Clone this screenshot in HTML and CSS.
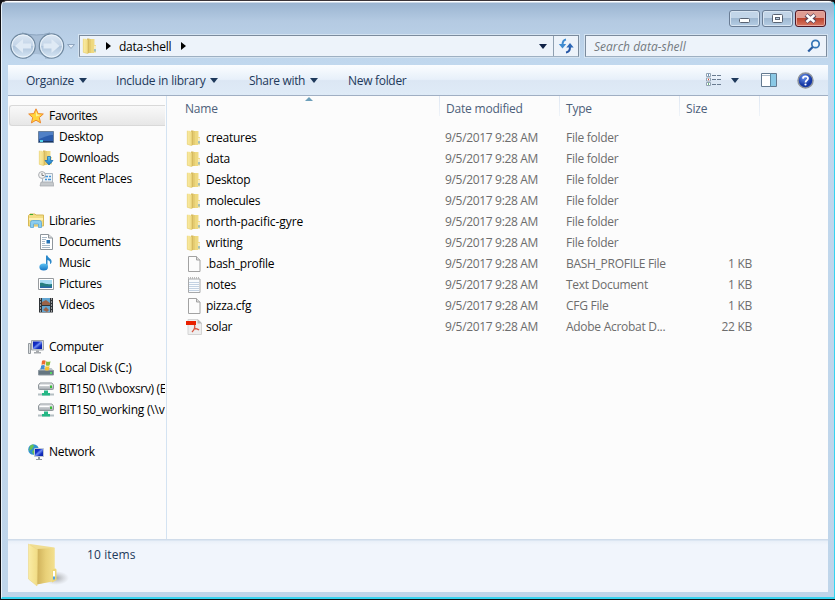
FILE: index.html
```html
<!DOCTYPE html>
<html lang="en">
<head>
<meta charset="utf-8">
<title>data-shell</title>
<link rel="stylesheet" href="styles.css">
</head>
<body>
<svg class="defs" aria-hidden="true">
  <defs>
    <linearGradient id="gold"><stop offset="0" stop-color="#cfb15a"/><stop offset=".5" stop-color="#e8d078"/><stop offset="1" stop-color="#f3e08f"/></linearGradient>
    <linearGradient id="flap"><stop offset="0" stop-color="#faeca6"/><stop offset="1" stop-color="#f1dc84"/></linearGradient>
    <linearGradient id="orb" x2="0" y2="1"><stop offset="0" stop-color="#dde9f5"/><stop offset=".48" stop-color="#c3d4e7"/><stop offset=".52" stop-color="#afc5dc"/><stop offset="1" stop-color="#d9e8f6"/></linearGradient>
    <linearGradient id="screen" x2="1" y2="1"><stop offset="0" stop-color="#0c1fae"/><stop offset=".35" stop-color="#1430c8"/><stop offset=".5" stop-color="#6f8cf2"/><stop offset=".7" stop-color="#1430c0"/><stop offset="1" stop-color="#0a1c9c"/></linearGradient>
    <linearGradient id="drive" x2="0" y2="1"><stop offset="0" stop-color="#f4f5f6"/><stop offset="1" stop-color="#a2a8ad"/></linearGradient>
    <linearGradient id="blue" x2="0" y2="1"><stop offset="0" stop-color="#5ec4f4"/><stop offset="1" stop-color="#1474c4"/></linearGradient>
    <radialGradient id="shade"><stop offset="0" stop-color="#777" stop-opacity=".6"/><stop offset="1" stop-color="#999" stop-opacity="0"/></radialGradient>
    <radialGradient id="help" cx=".4" cy=".3"><stop offset="0" stop-color="#6b94ee"/><stop offset="1" stop-color="#1437a4"/></radialGradient>
  </defs>
  <symbol id="folder" viewBox="0 0 16 16"><path d="M6 1h6v14H6Z" fill="#eed97f"/><path d="M5 .5h2.500v14.500l-2.500.5Z" fill="#d6ba60"/><path d="M7.500 1H9v14H7.500Z" fill="#e6cd72"/><path d="M1 .7h2.500L5.700 2v13.800L1 14.500Z" fill="url(#flap)"/><path d="M1.300.8v13.500l4.400 1.200" fill="none" stroke="#e6cf75" stroke-width=".6"/><path d="M11.500 1h1v6H14v7.500h-2.500Z" fill="#f0dc8b"/><path d="M13 8v3.500" stroke="#fff"/><path d="M13 11v2.500" stroke="#54a3e5"/></symbol>
  <symbol id="page" viewBox="0 0 16 16"><path d="M2.500.5h8L14 4v11.500H2.500Z" fill="#fcfcfc" stroke="#a2a2a2"/><path d="M10.500.5V4H14" fill="#ddd" stroke="#a2a2a2"/></symbol>
  <symbol id="notes" viewBox="0 0 16 16"><path d="M2.500 2H14v13.500H2.500Z" fill="#fafcfe" stroke="#a7a9ab"/><path d="M3 5.500h10M3 7.500h10M3 9.500h10M3 11.500h10M3 13.500h10" stroke="#c3d2e3"/><path d="M2 1h12" stroke="#bbb" stroke-width="2" stroke-dasharray="1 1"/></symbol>
  <symbol id="pdf" viewBox="0 0 16 16"><path d="M2 .5h9.500L15.500 4v11.500H2Z" fill="#eee" stroke="#d4d4d4"/><path d="M11.500 0 16 4.500h-4.500Z" fill="#b7b7b7"/><path d="M0 2h10v4H0Z" fill="#e92000"/><path d="M8.500 6c1 3-.5 5-2.500 7m2-3.500c2 0 4 .5 5 1.500m-5-1.500 1.500-.5" fill="none" stroke="#d75541" stroke-width="1.300"/></symbol>
  <symbol id="star" viewBox="0 0 16 16"><path d="m8 .8 2.100 4.800 5.200.4-4 3.600 1.300 5.300L8 12.200l-4.600 2.700 1.300-5.300L.7 6l5.200-.4Z" fill="#ffd53c" stroke="#ed882f"/><path d="M8 3 9.300 6.500 13 7 8 8.500Z" fill="#fff19a"/></symbol>
  <symbol id="desktop" viewBox="0 0 16 16"><path d="M.5 2.500h15v11H.5Z" fill="#2b5cad" stroke="#69809d"/><path d="M1 3h14v3c-5 0-8 2-14 4Z" fill="#5080c6"/><path d="M1 12.500h14" stroke="#183664"/><path d="M2 11h3v2H2Z" fill="#50d1e8"/></symbol>
  <symbol id="download" viewBox="0 0 16 16"><use href="#folder"/><path d="M9.500 6.500h3v4H15l-4 4.500-4-4.500h2.500Z" fill="url(#blue)" stroke="#1c6eb0" stroke-width=".8"/></symbol>
  <symbol id="recent" viewBox="0 0 16 16"><path d="M4.500 2.500h10v9h-10Z" fill="#edf3f8" stroke="#a9b5c0"/><path d="M7 5.500h3m1 0h2M7 8.500h2m1 0h3" stroke="#4695d6" stroke-width="1.500"/><path d="m3 11 12 0 1 4H2Z" fill="#c5c9cc" stroke="#a0a5aa" stroke-width=".7"/><circle cx="4" cy="4" r="3.400" fill="#f3f3f3" stroke="#aaadb1"/><path d="M4 2v2.500h2" fill="none" stroke="#666" stroke-width=".8"/></symbol>
  <symbol id="libraries" viewBox="0 0 16 16"><path d="M.5 2.500 2 1h5l1 1h7.500v11H.5Z" fill="#f3dd84" stroke="#d6b957"/><path d="M1 5h14v2H1Z" fill="#fff0b1"/><path d="M2 1.500h3" stroke="#39a832"/><path d="M2.500 14.500V9.500q0-2 2-2h7q2 0 2 2v5h-3V11h-5v3.500Z" fill="#8bcdf0" stroke="#5aa6d6" stroke-width=".8"/></symbol>
  <symbol id="document" viewBox="0 0 16 16"><path d="M2.500.5h8L14.500 4v11.500h-12Z" fill="#fff" stroke="#8f969c"/><path d="M10.500.5V4h4" fill="#ddd" stroke="#8f969c"/><path d="M4 3.500h5M4 5.500h4M4 7.500h3M4 9.500h3M4 11.500h8M4 13.500h8" stroke="#a7b8c6"/><path d="M8.500 6H12v3.500H8.500Z" fill="#2573b5"/></symbol>
  <symbol id="music" viewBox="0 0 16 16"><path d="M8 .5h1.500c.5 3 5 3 4 7-.5 1-1 1.500-1.500 1.500.5-3-1-3.500-2.500-4V12H8Z" fill="#2a87c9"/><ellipse cx="5.700" cy="12" rx="4.300" ry="3.500" fill="url(#blue)"/></symbol>
  <symbol id="picture" viewBox="0 0 16 16"><path d="M.5 2.500h15v11H.5Z" fill="#fff" stroke="#969a9e"/><path d="M2 4h12v8H2Z" fill="#a9dcf4"/><path d="M2 7c4-1 4 2 12 1v4H2Z" fill="#257e80"/><path d="M2 10.500h12V12H2Z" fill="#2866a8"/></symbol>
  <symbol id="video" viewBox="0 0 16 16"><path d="M1 1h14v14.500H1Z" fill="#303438"/><path d="M4 1h8v7H4ZM4 9h8v6H4Z" fill="#63a6d2"/><path d="m4 5 4-2 4 3v2H4ZM5 13l3-3 3 3-2 2Z" fill="#9b6348"/><path d="M2.500 1.500v14m11-14v14" stroke="#fff" stroke-dasharray="1 2"/></symbol>
  <symbol id="computer" viewBox="0 0 16 16"><path d="M.5 4.500h2v10h-2Z" fill="#dce0e2" stroke="#93999e"/><path d="M3.500 1.500h12v9.500h-12Z" fill="#d4d8dc" stroke="#a0a5aa"/><path d="M5 2.500h9V10H5Z" fill="url(#screen)"/><path d="M8 11.500h3V13h2v1.500H6V13h2Z" fill="#a5a9ad"/></symbol>
  <symbol id="disk" viewBox="0 0 16 16"><path d="M2.500 8h11l2.500 3H0Z" fill="#bac2c9"/><path d="M.5 10.500h15v4.500H.5Z" fill="#657681" stroke="#8c979f"/><path d="M12 12h2v2h-2Z" fill="#55d565"/><path d="M4 .8q2-1 3.700 0L7 4.800q-1-1-3.500 0Z" fill="#ed6b30"/><path d="M8.200 1.300q2 1 4.300 0l-.8 4q-2 1-4 0Z" fill="#87bd3e"/><path d="M3.200 5.500q2-1 3.700 0l-.7 4q-1-1-3.700 0Z" fill="#438bd2"/><path d="M7.500 6q2 1 4 0L11 10q-2 1-4.200 0Z" fill="#f5c132"/></symbol>
  <symbol id="netdrive" viewBox="0 0 16 16"><path d="M.5 4 2 2h12l1.500 2v3.500q0 1-1 1h-13q-1 0-1-1Z" fill="url(#drive)" stroke="#8f969b"/><path d="M1.500 4.500h10" stroke="#fff"/><path d="M12 4.500h2V7h-2Z" fill="#39bc36"/><path d="M0 13.500h16" stroke="#b5bfc3" stroke-width="2"/><path d="M6 9.500h4V12h2v2.500H4V12h2Z" fill="#25b785"/></symbol>
  <symbol id="network" viewBox="0 0 16 16"><circle cx="5.500" cy="5.500" r="5.300" fill="#3092d0"/><path d="M2 2q3-3 4 0L4 5 1 7Zm4 3 3 2-3 4-2-3Z" fill="#68c252"/><path d="M6.500 4.500h9v8h-9Z" fill="url(#screen)" stroke="#c0c8d0"/><path d="M10 13h2v2h2v1H8v-1h2Z" fill="#8f989f"/></symbol>
</svg>

<div class="window">
  <header class="titlebar">
    <div class="captions">
      <span class="caption"><svg width="31" height="17"><rect x="10.500" y="8.500" width="10" height="4" rx="1" fill="#fff" stroke="#596372"/></svg></span>
      <span class="caption"><svg width="31" height="17"><rect x="10.500" y="4.500" width="10" height="8" rx="1" fill="#fff" stroke="#596372"/><rect x="13.500" y="7.500" width="4" height="2" fill="#bacde1" stroke="#596372"/></svg></span>
      <span class="caption close"><svg width="31" height="17"><path d="m11 5 9 7m0-7-9 7" stroke="#59455a" stroke-width="4.500"/><path d="m11.500 5 8 7m0-7-8 7" stroke="#fff" stroke-width="2.600"/></svg></span>
    </div>
  </header>
  <div class="navbar">
    <svg class="orbs" width="70" height="30" viewBox="0 0 70 30"><path d="M14 1.500Q29 6 42 1.500V28H14Z" fill="#a8bed6"/><path d="M14 2Q29 6 42 2" fill="none" stroke="#8da6c0"/><path d="M19 25q9-4 18 0v5H19Z" fill="#bfd5ec"/><circle cx="15" cy="15" r="12.200" fill="url(#orb)" stroke="#6f889f" stroke-width="1.200"/><circle cx="43.500" cy="15" r="12.200" fill="url(#orb)" stroke="#6f889f" stroke-width="1.200"/><circle cx="15" cy="15" r="11" fill="none" stroke="#ecf4fb"/><circle cx="43.500" cy="15" r="11" fill="none" stroke="#ecf4fb"/><path d="m7 15 8-7v4.500h8v5h-8V22Z" fill="#dfeaf5"/><path d="m51.500 15-8-7v4.500h-8v5h8V22Z" fill="#dfeaf5"/><path d="M59.500 13.500h7L63 17.500Z" fill="#e5effa" stroke="#8fa6c0"/></svg>
    <div class="address">
      <svg class="icon"><use href="#folder"/></svg>
      <svg class="crumb" width="5" height="8"><path d="M0 0 5 4 0 8Z"/></svg>
      <span class="path">data-shell</span>
      <svg class="crumb" width="5" height="8"><path d="M0 0 5 4 0 8Z"/></svg>
      <svg class="drop" width="8" height="5"><path d="M0 0h8L4 5Z" fill="#102246"/></svg>
      <span class="refresh"><svg width="16" height="16" viewBox="0 0 16 16"><path d="M8 1.500Q4.500 2 4.500 7" fill="none" stroke="#3f8bd0" stroke-width="2"/><path d="M.8 6h7.400l-3.700 4.500Z" fill="#3f8bd0"/><path d="M8 14.500Q12 14 12 9" fill="none" stroke="#2757a5" stroke-width="2"/><path d="M8.300 9.500h7.400L12 5Z" fill="#2d68b7"/></svg></span>
    </div>
    <div class="search"><span>Search data-shell</span><svg width="14" height="14" viewBox="0 0 14 14"><circle cx="8.500" cy="5" r="3.700" fill="#f2f8fd" stroke="#3575b6" stroke-width="1.700"/><path d="m5.700 8-4.500 4.500" stroke="#2a5da1" stroke-width="2.300"/></svg></div>
  </div>

  <main class="client">
    <div class="toolbar">
      <span class="cmd organize">Organize<i class="caret"></i></span>
      <span class="cmd include">Include in library<i class="caret"></i></span>
      <span class="cmd share">Share with<i class="caret"></i></span>
      <span class="cmd">New folder</span>
      <div class="tools">
        <svg width="16" height="14" viewBox="0 0 16 14"><path d="M.5.500h4v3h-4zm0 4.500h4v3h-4zm0 4.500h4v3h-4z" fill="#fff" stroke="#91a2b2"/><path d="M2 2h1" stroke="#3670aa" stroke-width="1.300"/><path d="M2 6.500h1" stroke="#d44836" stroke-width="1.500"/><path d="M2 11h1" stroke="#3c9b51" stroke-width="1.300"/><path d="M6 2.500h4m1 0h4M6 6.500h4m1 0h4M6 11.500h4m1 0h4" stroke="#6a7c91"/></svg>
        <i class="caret"></i>
        <svg class="pane" width="16" height="14"><path d="M.5.500h15v13H.5Z" fill="#fff" stroke="#63798f"/><path d="M1 2.500h9" stroke="#a9b9c9"/><path d="M10 1h5v12h-5Z" fill="#8ac8e5"/><path d="M9.500 0v14" stroke="#5b8aa4"/></svg>
        <svg class="help" width="17" height="17"><circle cx="8.500" cy="8.500" r="7.500" fill="url(#help)" stroke="#8e949c" stroke-width="1.500"/><path d="M5.900 6.600C6 3.500 11.200 3.600 11 6.500 10.900 8.200 8.500 8.300 8.500 10.400" fill="none" stroke="#fff" stroke-width="1.800"/><circle cx="8.500" cy="12.500" r="1.100" fill="#fff"/></svg>
      </div>
    </div>
    <div class="body">
      <nav class="tree">
        <section><div class="node root selected"><svg class="icon"><use href="#star"/></svg><span>Favorites</span></div>
          <div class="node"><svg class="icon"><use href="#desktop"/></svg><span>Desktop</span></div>
          <div class="node"><svg class="icon"><use href="#download"/></svg><span>Downloads</span></div>
          <div class="node"><svg class="icon"><use href="#recent"/></svg><span>Recent Places</span></div></section>
        <section><div class="node root"><svg class="icon"><use href="#libraries"/></svg><span>Libraries</span></div>
          <div class="node"><svg class="icon"><use href="#document"/></svg><span>Documents</span></div>
          <div class="node"><svg class="icon"><use href="#music"/></svg><span>Music</span></div>
          <div class="node"><svg class="icon"><use href="#picture"/></svg><span>Pictures</span></div>
          <div class="node"><svg class="icon"><use href="#video"/></svg><span>Videos</span></div></section>
        <section><div class="node root"><svg class="icon"><use href="#computer"/></svg><span>Computer</span></div>
          <div class="node"><svg class="icon"><use href="#disk"/></svg><span>Local Disk (C:)</span></div>
          <div class="node drive"><svg class="icon"><use href="#netdrive"/></svg><span>BIT150 (\\vboxsrv) (E</span></div>
          <div class="node working"><svg class="icon"><use href="#netdrive"/></svg><span>BIT150_working (\\v</span></div></section>
        <section><div class="node root"><svg class="icon"><use href="#network"/></svg><span>Network</span></div></section>
      </nav>
      <div class="files">
        <div class="head"><span class="name">Name<svg class="sort" width="8" height="4"><path d="M0 4 4 0 8 4Z" fill="#6d9fba"/></svg></span><span>Date modified</span><span>Type</span><span>Size</span></div>
        <div class="row"><span class="name"><svg class="icon"><use href="#folder"/></svg>creatures</span><span class="date">9/5/2017 9:28 AM</span><span>File folder</span><span class="size"></span></div>
        <div class="row"><span class="name"><svg class="icon"><use href="#folder"/></svg>data</span><span class="date">9/5/2017 9:28 AM</span><span>File folder</span><span class="size"></span></div>
        <div class="row"><span class="name"><svg class="icon"><use href="#folder"/></svg>Desktop</span><span class="date">9/5/2017 9:28 AM</span><span>File folder</span><span class="size"></span></div>
        <div class="row"><span class="name"><svg class="icon"><use href="#folder"/></svg>molecules</span><span class="date">9/5/2017 9:28 AM</span><span>File folder</span><span class="size"></span></div>
        <div class="row"><span class="name wide"><svg class="icon"><use href="#folder"/></svg>north-pacific-gyre</span><span class="date">9/5/2017 9:28 AM</span><span>File folder</span><span class="size"></span></div>
        <div class="row"><span class="name"><svg class="icon"><use href="#folder"/></svg>writing</span><span class="date">9/5/2017 9:28 AM</span><span>File folder</span><span class="size"></span></div>
        <div class="row"><span class="name"><svg class="icon"><use href="#page"/></svg>.bash_profile</span><span class="date">9/5/2017 9:28 AM</span><span>BASH_PROFILE File</span><span class="size">1 KB</span></div>
        <div class="row"><span class="name"><svg class="icon"><use href="#notes"/></svg>notes</span><span class="date">9/5/2017 9:28 AM</span><span>Text Document</span><span class="size">1 KB</span></div>
        <div class="row"><span class="name"><svg class="icon"><use href="#page"/></svg>pizza.cfg</span><span class="date">9/5/2017 9:28 AM</span><span>CFG File</span><span class="size">1 KB</span></div>
        <div class="row"><span class="name"><svg class="icon"><use href="#pdf"/></svg>solar</span><span class="date">9/5/2017 9:28 AM</span><span>Adobe Acrobat D...</span><span class="size">22 KB</span></div>
      </div>
    </div>
    <footer class="details">
      <svg width="44" height="46" viewBox="0 0 44 46"><ellipse cx="29" cy="35" rx="13" ry="7" fill="url(#shade)"/><path d="M3 1 27.500 4.500V38L10 41Z" fill="#f0dd92"/><path d="M10 6 27.500 5v33L10 41.500Z" fill="url(#gold)"/><path d="m1.500 1 9 5.500-.5 36.500-8.500-7Z" fill="url(#flap)" stroke="#ecd784" stroke-width=".6"/><path d="M25 27q4.500-3 4.500 0v10l-4.500 2.500Z" fill="#eed777"/><path d="M27 28v6" stroke="#fff" stroke-width="2"/><path d="M27 33.500v3" stroke="#53a5e5" stroke-width="2"/></svg>
      <span>10 items</span>
    </footer>
  </main>
</div>
</body>
</html>
```
FILE: styles.css
```css
* { box-sizing: border-box; }
html, body { height: 100%; }
body { margin: 0; overflow: hidden; background: #101014; font: 12px/21px "Open Sans", "Noto Sans", sans-serif; letter-spacing: -.28px; color: #000; }
.defs { position: absolute; width: 0; height: 0; }
svg { display: block; flex: none; }
.icon { width: 16px; height: 16px; }
.window { height: 599px; margin-left: 1px; border: 1px solid #eaf3fb; border-top-color: #3a3438; border-right: 1px solid #35d3ef; border-bottom: 2px solid #35d3ef; border-radius: 6px 6px 0 0; background: linear-gradient(#fff 0, #fff 1px, #9bb5d1 2px, #b4cae2 20px, #c1d8ee 62px, #bfd5ea 100%); padding: 0 6px 5px; }
.titlebar { height: 30px; display: flex; justify-content: flex-end; padding-top: 9px; padding-right: 2px; }
.captions { display: flex; gap: 2px; }
.caption { width: 31px; height: 17px; border-radius: 3px; border: 1px solid #697c94; box-shadow: inset 0 0 0 1px #d8e5f2; background: linear-gradient(#c2d5e8 48%, #9fb8d1 50%, #b5cde5); }
.caption svg { margin: -1px; }
.close { border-color: #4f1724; box-shadow: inset 0 0 0 1px #e7a9a0; background: linear-gradient(#df9c92 48%, #bd442e 50%, #d67863); }
.navbar { height: 34px; display: flex; letter-spacing: -.12px; }
.orbs { margin-right: 1px; }
.address { width: 500px; height: 22px; margin-top: 4px; border: 1px solid #7b8b9d; border-bottom-color: #9eb0c2; background: #edf3fa; display: flex; align-items: center; padding-left: 2px; box-shadow: 0 0 0 1px #d4e3f1; }
.address .crumb { margin-left: 8px; }
.address .path { margin: 0 10px 0 8px; letter-spacing: -.25px; }
.address .path + .crumb { margin-left: 0; }
.drop { margin-left: auto; margin-right: 6px; }
.refresh { width: 25px; height: 20px; border-left: 1px solid #8fa0b1; padding: 2px 4px; }
.search { width: 242px; height: 22px; margin: 4px 0 0 6px; border: 1px solid #7b8b9d; border-bottom-color: #9eb0c2; background: #edf3fa; display: flex; align-items: center; justify-content: space-between; padding: 0 5px 0 8px; color: #747a80; font-style: italic; letter-spacing: .02px; box-shadow: 0 0 0 1px #d4e3f1; }
.client { width: 820px; height: 527px; background: #fcfcfc; display: flex; flex-direction: column; }
.toolbar { height: 31px; border-bottom: 1px solid #a0afc3; background: linear-gradient(#fbfdff, #e7f0fa 48%, #dce7f4 52%, #dfebf7); display: flex; align-items: center; color: #1e395b; padding: 0 14px 0 18px; }
.cmd { display: flex; align-items: center; letter-spacing: -.3px; }
.caret { border: 4px solid transparent; border-top: 5px solid #1e395b; border-bottom: 0; margin-left: 5px; }
.organize { width: 90px; letter-spacing: -.28px; }
.include { width: 133px; letter-spacing: -.22px; }
.share { width: 99px; letter-spacing: -.32px; }
.tools { margin-left: auto; display: flex; align-items: center; }
.tools .caret { margin-left: 9px; }
.pane { margin-left: 22px; }
.help { margin-left: 20px; }
.body { height: 443px; display: flex; }
.tree { width: 159px; border-right: 1px solid #d4e3f2; padding: 9px 1px 0; overflow: hidden; }
.tree section { margin-bottom: 21px; }
.node { height: 21px; display: flex; align-items: center; gap: 5px; padding-left: 29px; white-space: nowrap; overflow: hidden; }
.node.root { padding-left: 19px; }
.node.drive { letter-spacing: -.33px; }
.node.working { letter-spacing: -.22px; }
.selected { border: 1px solid #d9d9d9; border-right: 0; border-radius: 3px 0 0 3px; background: linear-gradient(#f9f9f9, #e7e7e7); }
.node.root.selected { padding-left: 18px; }
.files { flex: 1; }
.head, .row { display: grid; grid-template-columns: 273px 120px 120px 80px; height: 21px; color: #6d6d6d; white-space: nowrap; }
.head { height: 31px; color: #4c607a; line-height: 26px; letter-spacing: -.2px; }
.head > span { height: 20px; padding-left: 6px; border-right: 1px solid; border-image: linear-gradient(#dde6f2, #f0f4f9) 1; position: relative; }
.head > .name { padding-left: 18px; }
.sort { position: absolute; left: 138px; top: 1px; }
.row > span { padding-left: 6px; }
.row > .name { display: flex; align-items: center; gap: 4px; padding-left: 19px; color: #000; }
.row > .name.wide { letter-spacing: -.08px; }
.row > .date { padding-left: 5px; letter-spacing: -.33px; }
.row > .size { text-align: right; padding-right: 8px; }
.details { height: 53px; border-top: 1px solid #d0dcea; background: linear-gradient(#e7eef7, #f1f5fc 5px); box-shadow: inset 0 1px #dce6f2; display: flex; color: #1e395b; padding: 3px 0 0 19px; gap: 16px; letter-spacing: .12px; }
.details span { margin-top: 1px; }
```
